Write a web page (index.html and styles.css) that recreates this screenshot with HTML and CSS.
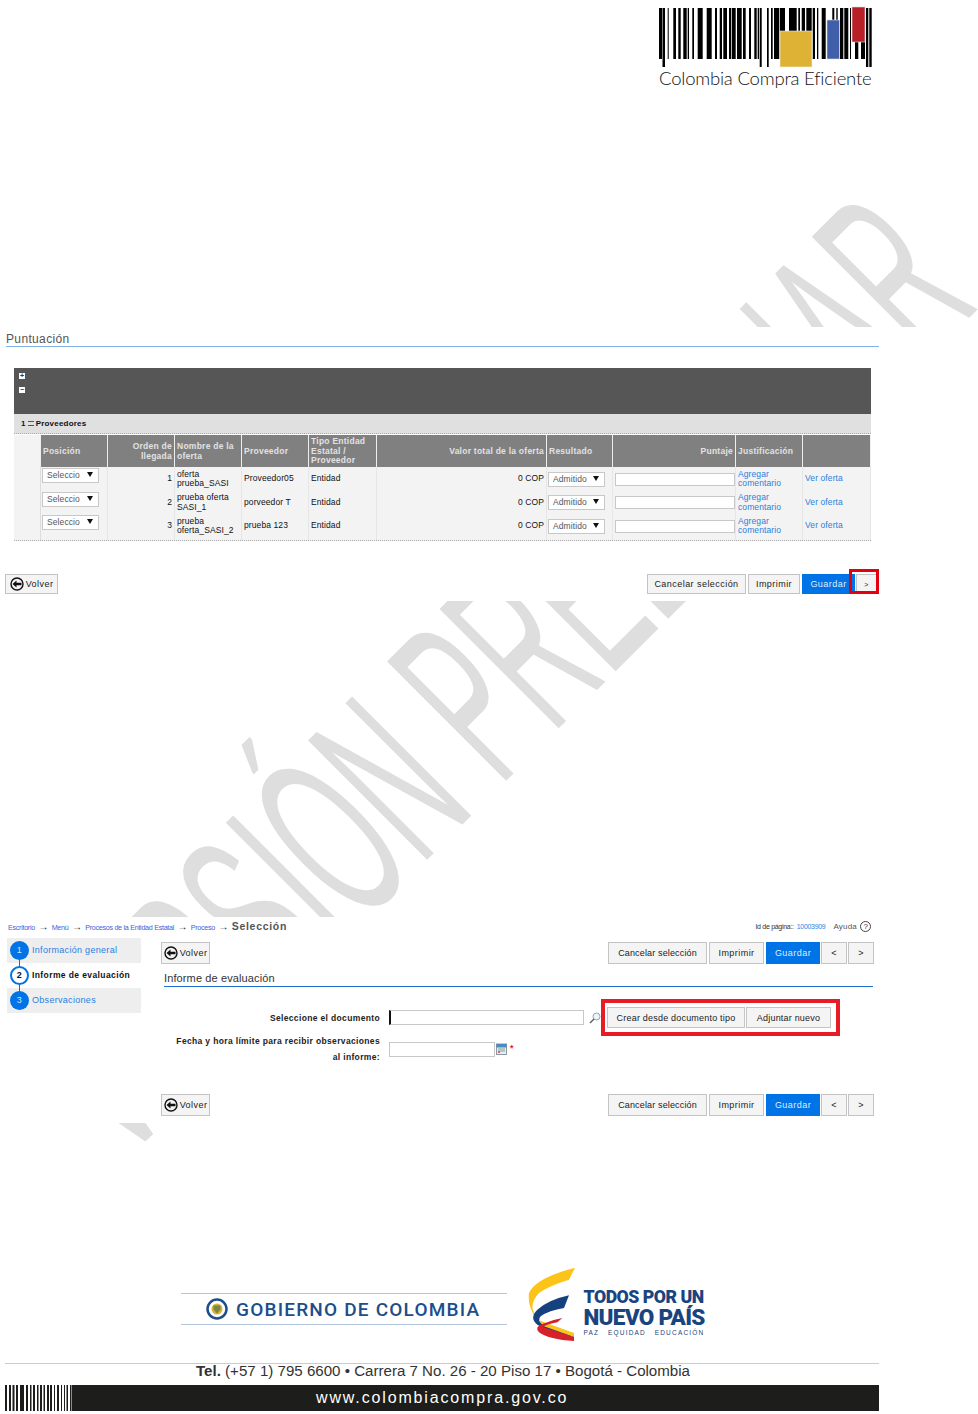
FILE: index.html
```html
<!DOCTYPE html>
<html lang="es">

<head>
    <meta charset="utf-8">
    <title>Colombia Compra Eficiente</title>
    <link rel="stylesheet" href="styles.css">
</head>

<body>
    <svg class="watermark" viewBox="0 0 978 1414" aria-hidden="true">
        <text transform="translate(123 1164) rotate(-45) scale(.455 1)" font-size="245">VERSIÓN PRELIMINAR</text>
    </svg>

    <header class="top">
        <div class="brand">
            <svg class="brand-bars" viewBox="655 4 220 66">
                <path fill="#000" d="M659 8h3v51h-3zM662.5 8h2.5v59h-2.5zM667.7 8h1v51h-1zM673.3 8h2.7v51h-2.7zM678.3 8h2.4v51h-2.4zM683.3 8h3.4v51h-3.4zM687.7 8h1.3v51h-1.3zM692.3 8h1.7v51h-1.7zM697.7 8h5v51h-5zM706.7 8h5v51h-5zM715 8h2v51h-2zM719.7 8h2.3v51h-2.3zM723.3 8h3.7v51h-3.7zM729 8h2v51h-2zM731.7 8h4v51h-4zM737 8h4.7v51h-4.7zM743 8h2.7v51h-2.7zM749 8h2v51h-2zM754.3 8h2.4v51h-2.4zM757.7 8h1.3v51h-1.3zM759.7 8h2v59h-2zM767 8h1.7v59h-1.7zM771 8h1.7v51h-1.7zM774 8h5v51h-5zM779.7 8h5.3v51h-5.3zM789 8h7.7v51h-7.7zM798.3 8h1.7v51h-1.7zM801.7 8h3.3v51h-3.3zM806.3 8h5.4v51h-5.4zM812.7 8h2.3v51h-2.3zM817 8h1.3v51h-1.3zM821.7 8h4v51h-4zM832.3 8h2v51h-2zM836.3 8h1.4v51h-1.4zM840 8h3.3v51h-3.3zM844.3 8h4v51h-4zM850 8h1v51h-1zM855 8h3.3v51h-3.3zM861 8h4v51h-4zM866 8h2.3v59h-2.3zM869.3 8h2.4v59h-2.4z" />
                <rect x="780" y="31" width="32" height="36" fill="#deb335" stroke="#eee" stroke-width=".6" />
                <rect x="827" y="20" width="12.500" height="39" fill="#3f5fa8" stroke="#ddd" stroke-width=".6" />
                <rect x="852" y="7" width="13" height="35" fill="#b81f27" stroke="#ddd" stroke-width=".6" />
            </svg>
            <div class="brand-name">Colombia Compra Eficiente</div>
        </div>
    </header>

    <section class="shot score">
        <h2 class="score-title">Puntuación</h2>
        <div class="panel">
            <div class="panel-head">
                <span class="toggle">+</span>
                <span class="toggle">&minus;</span>
            </div>
            <div class="group-row"><b>1</b> <span class="group-icon"></span> <b>Proveedores</b></div>
            <table class="grid">
                <colgroup>
                    <col class="c-indent">
                    <col class="c-std">
                    <col class="c-std">
                    <col class="c-std">
                    <col class="c-std">
                    <col class="c-tipo">
                    <col class="c-valor">
                    <col class="c-res">
                    <col class="c-puntaje">
                    <col class="c-std">
                    <col class="c-last">
                </colgroup>
                <thead>
                    <tr>
                        <td class="indent"></td>
                        <th>Posición</th>
                        <th class="num">Orden de llegada</th>
                        <th>Nombre de la oferta</th>
                        <th>Proveedor</th>
                        <th>Tipo Entidad Estatal / Proveedor</th>
                        <th class="num">Valor total de la oferta</th>
                        <th>Resultado</th>
                        <th class="num">Puntaje</th>
                        <th>Justificación</th>
                        <th></th>
                    </tr>
                </thead>
                <tbody>
                    <tr>
                        <td class="indent"></td>
                        <td class="pos"><div class="select">Seleccio</div></td>
                        <td class="num">1</td>
                        <td>oferta prueba_SASI</td>
                        <td>Proveedor05</td>
                        <td>Entidad</td>
                        <td class="num">0 COP</td>
                        <td><div class="select">Admitido</div></td>
                        <td class="score-cell"><input class="field" type="text"></td>
                        <td><a href="#">Agregar comentario</a></td>
                        <td><a href="#">Ver oferta</a></td>
                    </tr>
                    <tr>
                        <td class="indent"></td>
                        <td class="pos"><div class="select">Seleccio</div></td>
                        <td class="num">2</td>
                        <td>prueba oferta SASI_1</td>
                        <td>porveedor T</td>
                        <td>Entidad</td>
                        <td class="num">0 COP</td>
                        <td><div class="select">Admitido</div></td>
                        <td class="score-cell"><input class="field" type="text"></td>
                        <td><a href="#">Agregar comentario</a></td>
                        <td><a href="#">Ver oferta</a></td>
                    </tr>
                    <tr>
                        <td class="indent"></td>
                        <td class="pos"><div class="select">Seleccio</div></td>
                        <td class="num">3</td>
                        <td>prueba oferta_SASI_2</td>
                        <td>prueba 123</td>
                        <td>Entidad</td>
                        <td class="num">0 COP</td>
                        <td><div class="select">Admitido</div></td>
                        <td class="score-cell"><input class="field" type="text"></td>
                        <td><a href="#">Agregar comentario</a></td>
                        <td><a href="#">Ver oferta</a></td>
                    </tr>
                </tbody>
            </table>
        </div>
        <div class="actions score-actions">
            <button class="btn btn-back">
                <svg class="back-icon" viewBox="0 0 14 14"><circle cx="7" cy="7" r="6" fill="none" stroke="#111" stroke-width="1.4" /><path fill="#111" d="M2.500 7l4-3.500v2.300h5v2.400h-5v2.300z" /></svg>
                Volver
            </button>
            <div class="actions-right">
                <button class="btn btn-cancel">Cancelar selección</button>
                <button class="btn btn-print">Imprimir</button>
                <button class="btn btn-save">Guardar</button>
                <button class="btn btn-next marked-next">&gt;</button>
            </div>
        </div>
    </section>

    <section class="shot eval">
        <div class="crumbs">
            <nav class="crumb-path">
                <a href="#">Escritorio</a><span class="arrow">&rarr;</span>
                <a href="#">Menú</a><span class="arrow">&rarr;</span>
                <a href="#">Procesos de la Entidad Estatal</a><span class="arrow">&rarr;</span>
                <a href="#">Proceso</a><span class="arrow">&rarr;</span>
                <strong>Selección</strong>
            </nav>
            <div class="page-id">
                <span class="page-id-label">Id de página::</span>
                <a href="#">10003909</a>
                <span class="help">Ayuda</span>
                <span class="help-icon">?</span>
            </div>
        </div>
        <div class="eval-body">
            <ol class="steps">
                <li class="step"><span class="step-dot">1</span><a class="step-label" href="#">Información general</a></li>
                <li class="step step-on"><span class="step-dot">2</span><span class="step-label">Informe de evaluación</span></li>
                <li class="step"><span class="step-dot">3</span><a class="step-label" href="#">Observaciones</a></li>
            </ol>
            <div class="eval-main">
                <div class="actions">
                    <button class="btn btn-back-sm">
                        <svg class="back-icon" viewBox="0 0 14 14"><circle cx="7" cy="7" r="6" fill="none" stroke="#111" stroke-width="1.4" /><path fill="#111" d="M2.500 7l4-3.500v2.300h5v2.400h-5v2.300z" /></svg>
                        Volver
                    </button>
                    <div class="actions-right">
                        <button class="btn btn-cancel">Cancelar selección</button>
                        <button class="btn btn-print-lg">Imprimir</button>
                        <button class="btn btn-save">Guardar</button>
                        <button class="btn btn-arrow">&lt;</button>
                        <button class="btn btn-arrow">&gt;</button>
                    </div>
                </div>
                <h2 class="eval-title">Informe de evaluación</h2>
                <div class="form-row">
                    <label class="form-label">Seleccione el documento</label>
                    <input class="field doc-field" type="text">
                    <svg class="search-icon" viewBox="0 0 12 12"><circle cx="7.500" cy="4.500" r="3.500" fill="#eef4f8" stroke="#8fa6b5" /><path d="M5 7l-4 4" stroke="#666" stroke-width="1.600" /></svg>
                    <div class="marked-group">
                        <button class="btn btn-doc">Crear desde documento tipo</button>
                        <button class="btn btn-new">Adjuntar nuevo</button>
                    </div>
                </div>
                <div class="form-row form-row-date">
                    <label class="form-label">Fecha y hora límite para recibir observaciones al informe:</label>
                    <input class="field date-field" type="text">
                    <svg class="cal-icon" viewBox="0 0 11 12"><rect x=".5" y="1" width="10" height="10.500" fill="#e8edf0" stroke="#8a9aa5" /><rect x=".5" y="1" width="10" height="3.500" fill="#4a8cc0" /><path d="M2 6h7M2 8h7" stroke="#8a9aa5" /><rect x="2" y="8" width="2" height="2" fill="#d66" /></svg>
                    <span class="required">*</span>
                </div>
                <div class="actions eval-actions">
                    <button class="btn btn-back-sm">
                        <svg class="back-icon" viewBox="0 0 14 14"><circle cx="7" cy="7" r="6" fill="none" stroke="#111" stroke-width="1.4" /><path fill="#111" d="M2.500 7l4-3.500v2.300h5v2.400h-5v2.300z" /></svg>
                        Volver
                    </button>
                    <div class="actions-right">
                        <button class="btn btn-cancel">Cancelar selección</button>
                        <button class="btn btn-print-lg">Imprimir</button>
                        <button class="btn btn-save">Guardar</button>
                        <button class="btn btn-arrow">&lt;</button>
                        <button class="btn btn-arrow">&gt;</button>
                    </div>
                </div>
            </div>
        </div>
    </section>

    <footer class="foot">
        <div class="foot-logos">
            <div class="gov">
                <svg class="gov-seal" viewBox="0 0 22 22"><circle cx="11" cy="11" r="9.500" fill="#fff" stroke="#1c4d8c" stroke-width="2.500" /><circle cx="11" cy="11" r="5.500" fill="#d9b23a" /><path d="M7.500 7.500h7v4l-3.500 4-3.500-4z" fill="#3b6b4a" opacity=".6" /></svg>
                <span class="gov-name">GOBIERNO DE COLOMBIA</span>
            </div>
            <svg class="swoosh" viewBox="0 0 180 246">
                <path fill="#fcc419" d="M168 14L150 50Q90 68 60 90Q40 110 40 135L52 168Q25 130 30 90Q50 45 168 14z" />
                <path fill="#15427e" d="M150 97L135 135Q90 142 65 160Q52 172 75 188L165 215V222Q90 208 55 185Q30 165 55 140Q90 110 150 97z" />
                <path fill="#fcc419" d="M60 172L165 210V222L75 190z" />
                <path fill="#d8202a" d="M130 165L115 178Q85 183 72 192L165 222V234Q90 230 60 208Q45 192 70 183Q100 170 130 165z" />
            </svg>
            <div class="slogan">
                <div class="slogan-one">TODOS POR UN</div>
                <div class="slogan-two">NUEVO PAÍS</div>
                <div class="slogan-three"><span>PAZ</span><span>EQUIDAD</span><span>EDUCACIÓN</span></div>
            </div>
        </div>
        <div class="contact"><b>Tel.</b> (+57 1) 795 6600 • Carrera 7 No. 26 - 20 Piso 17 • Bogotá - Colombia</div>
        <div class="site-bar">
            <svg class="site-bars" viewBox="5 0 67 26"><path fill="#1d1d1b" d="M5 0h2v26h-2zM9 0h2v26h-2zM12.500 0h2v26h-2zM16 0h2v26h-2zM20 0h4v26h-4zM26 0h2v26h-2zM30 0h1.500v26h-1.500zM33 0h2v26h-2zM37 0h1.500v26h-1.500zM40 0h2v26h-2zM43.500 0h1.500v26h-1.500zM47 0h2v26h-2zM50 0h2v26h-2zM54 0h1v26h-1zM57 0h2v26h-2zM61 0h1v26h-1zM64 0h1v26h-1zM66.500 0h1.500v26h-1.500zM70 0h1.500v26h-1.500z" /></svg>
            <div class="site-url">www.colombiacompra.gov.co</div>
        </div>
    </footer>
</body>

</html>
```

FILE: styles.css
```css
html {
    background: #fff;
}

body {
    position: relative;
    margin: 0;
    width: 978px;
    height: 1414px;
    overflow: hidden;
    font-family: "Liberation Sans", Arial, sans-serif;
    font-size: 8.5px;
    color: #111;
}

a {
    color: #2a7fe0;
    text-decoration: none;
}

.watermark {
    position: absolute;
    left: 0;
    top: 0;
    width: 978px;
    height: 1414px;
    z-index: -1;
}

.watermark text {
    font-family: "Liberation Sans", Arial, sans-serif;
    fill: #dedede;
}

/* header logo */
.top {
    height: 327px;
    display: flex;
    justify-content: flex-end;
    padding-right: 103px;
    box-sizing: border-box;
    padding-top: 4px;
}

.brand {
    width: 220px;
}

.brand-bars {
    display: block;
    width: 220px;
    height: 66px;
}

.brand-name {
    margin: -2px 0 0 4px;
    font-family: Lato, "Open Sans", sans-serif;
    font-weight: 300;
    font-size: 18.5px;
    line-height: 21px;
    letter-spacing: -.2px;
    color: #111;
    white-space: nowrap;
}

.shot {
    background: #fff;
}

/* first screenshot */
.score {
    height: 274px;
    padding: 0 99px 0 6px;
}

.score-title {
    margin: 0;
    padding-top: 5px;
    height: 14px;
    font-size: 12px;
    line-height: 14px;
    font-weight: normal;
    letter-spacing: .35px;
    color: #555;
    border-bottom: 1px solid #7fb2e2;
}

.panel {
    margin: 21px 8px 0;
}

.panel-head {
    height: 46px;
    background: #565656;
    padding: 5px 0 0 5px;
    box-sizing: border-box;
}

.toggle {
    display: block;
    width: 6px;
    height: 6px;
    margin-bottom: 8px;
    background: #fff;
    color: #333;
    font-size: 7px;
    line-height: 6px;
    font-weight: bold;
    text-align: center;
}

.group-row {
    height: 19px;
    line-height: 19px;
    background: #e0e0e0;
    border-bottom: 1px dotted #aaa;
    padding-left: 7px;
    font-size: 8px;
    letter-spacing: .2px;
    color: #111;
    margin-bottom: 1px;
    display: flex;
    align-items: center;
    gap: 1px;
}

.group-icon {
    width: 6px;
    height: 5px;
    border-top: 1px solid #555;
    border-bottom: 1px solid #555;
    box-sizing: border-box;
    margin: 0 1px;
}

.grid {
    width: 857px;
    table-layout: fixed;
    border-collapse: separate;
    border-spacing: 0;
    background: #f3f3f3;
    border-bottom: 1px dotted #aaa;
    letter-spacing: .1px;
}

.c-indent {
    width: 27px;
}

.c-std {
    width: 67px;
}

.c-tipo {
    width: 68px;
}

.c-valor {
    width: 170px;
}

.c-res {
    width: 66px;
}

.c-puntaje {
    width: 123px;
}

.c-last {
    width: 68px;
}

.grid th {
    height: 32px;
    padding: 1px 2px 0;
    box-sizing: border-box;
    background: #808080;
    color: #e2e2e2;
    font-size: 8.5px;
    line-height: 9.5px;
    letter-spacing: .25px;
    text-align: left;
    border-right: 1px solid #eee;
    overflow: hidden;
}

.grid th.num {
    text-align: right;
}

.grid .indent {
    background: #f3f3f3;
    padding: 0;
    border-right: 1px solid #eee;
}

.grid tbody td {
    box-sizing: border-box;
    height: 24px;
    padding: 0 2px;
    font-size: 8.5px;
    line-height: 9.5px;
    border-right: 1px solid #e6e6e6;
    vertical-align: middle;
}

.grid tbody tr:nth-child(2) td {
    height: 23px;
}

.grid tbody tr:last-child td {
    height: 26px;
    padding-bottom: 2px;
}

.grid tbody td.indent {
    border-right-color: #ddd;
}

.grid td.num {
    text-align: right;
}

.grid td.pos {
    vertical-align: top;
    padding-top: 1px;
}

.grid td.score-cell {
    padding-left: 2px;
    padding-right: 0;
}

.select {
    position: relative;
    width: 57px;
    height: 15px;
    box-sizing: border-box;
    margin-left: -1px;
    padding-left: 4px;
    line-height: 12px;
    background: #fff;
    border: 1px solid #c8c8c8;
    color: #555;
}

.select::after {
    content: "";
    position: absolute;
    right: 5px;
    top: 3px;
    border-left: 3px solid transparent;
    border-right: 3px solid transparent;
    border-top: 5px solid #111;
}

.field {
    display: block;
    box-sizing: border-box;
    width: 100%;
    height: 13px;
    margin: 0;
    padding: 0;
    border: 1px solid #c8c8c8;
    background: #fff;
    border-radius: 0;
}

/* buttons */
.actions {
    display: flex;
    justify-content: space-between;
    align-items: flex-start;
}

.actions-right {
    display: flex;
    gap: 2px;
}

.score-actions {
    margin: 33px 2px 0 -1px;
}

.btn {
    display: flex;
    align-items: center;
    justify-content: center;
    gap: 2px;
    height: 20px;
    margin: 0;
    padding: 0;
    box-sizing: border-box;
    background: #f4f4f4;
    border: 1px solid #c4c4c4;
    font-family: inherit;
    font-size: 9px;
    letter-spacing: .45px;
    color: #222;
    white-space: nowrap;
}

.back-icon {
    width: 14px;
    height: 14px;
}

.btn-back {
    width: 53px;
}

.btn-cancel {
    width: 99px;
}

.btn-print {
    width: 52px;
}

.btn-save {
    width: 53px;
    background: #0073e6;
    border-color: #0073e6;
    color: #dfefff;
}

.btn-next {
    width: 21px;
    font-size: 7px;
    margin-left: -1px;
}

.marked-next {
    position: relative;
}

.marked-next::after {
    content: "";
    position: absolute;
    left: -8px;
    right: -3px;
    top: -6px;
    bottom: -1px;
    border: 3px solid #e6000f;
}

/* second screenshot */
.eval {
    margin-top: 316px;
    height: 206px;
    padding-left: 7px;
}

.crumbs {
    height: 21px;
    display: flex;
    justify-content: space-between;
    align-items: flex-end;
    padding: 0 107px 6px 1px;
    box-sizing: border-box;
}

.crumb-path {
    display: flex;
    align-items: baseline;
    gap: 3px;
    font-size: 7.2px;
    letter-spacing: -.3px;
}

.crumb-path a {
    color: #3f5fe0;
}

.arrow {
    font-size: 10px;
    margin: 0 .5px;
    color: #222;
}

.crumb-path strong {
    font-size: 10.5px;
    letter-spacing: .7px;
    color: #555;
}

.page-id {
    display: flex;
    align-items: center;
    gap: 3px;
    font-size: 7px;
    color: #333;
    letter-spacing: -.3px;
}

.help {
    margin-left: 5px;
    font-size: 8px;
    color: #555;
    letter-spacing: .2px;
}

.help-icon {
    width: 9px;
    height: 9px;
    border: 1px solid #444;
    border-radius: 50%;
    font-size: 8px;
    line-height: 9px;
    text-align: center;
    color: #333;
}

.eval-body {
    display: flex;
    gap: 20px;
}

.steps {
    width: 134px;
    height: 75px;
    margin: 0;
    padding: 0;
    list-style: none;
    background: #eee;
    font-size: 9px;
    letter-spacing: .3px;
}

.step {
    position: relative;
    height: 25px;
    display: flex;
    align-items: center;
    gap: 3px;
    padding-left: 3px;
}

.step-label {
    margin-top: -2px;
}

.step-on {
    background: #fff;
    font-weight: bold;
    color: #111;
    font-size: 8.5px;
    letter-spacing: .4px;
}

.step + .step::before {
    content: "";
    position: absolute;
    left: 12px;
    top: -5px;
    width: 1px;
    height: 9px;
    background: #0073e6;
}

.step-dot {
    position: relative;
    width: 19px;
    height: 19px;
    flex: none;
    box-sizing: border-box;
    border-radius: 50%;
    background: #0073e6;
    color: #cfe4ff;
    text-align: center;
    line-height: 19px;
    font-weight: normal;
    font-size: 9px;
}

.step-on .step-dot {
    background: #fff;
    border: 2px solid #0073e6;
    color: #111;
    font-weight: bold;
    line-height: 15px;
}

.eval-main {
    width: 713px;
    padding-top: 4px;
}

.btn-back-sm {
    width: 49px;
    height: 22px;
}

.eval-main .btn-cancel,
.eval-main .btn-save,
.eval-main .btn-print-lg,
.eval-main .btn-arrow {
    height: 22px;
}

.eval-main .btn-cancel {
    letter-spacing: .15px;
}

.btn-print-lg {
    width: 55px;
}

.eval-main .btn-save {
    width: 54px;
}

.btn-arrow {
    width: 26px;
    margin-left: -1px;
}

.eval-title {
    margin: 7px 1px 0 3px;
    height: 15px;
    font-size: 11px;
    line-height: 15px;
    font-weight: normal;
    letter-spacing: .12px;
    color: #333;
    border-bottom: 1px solid #1f6fd0;
}

.form-row {
    display: flex;
    align-items: center;
    height: 37px;
    margin-top: 12px;
}

.form-label {
    width: 210px;
    flex: none;
    margin: 0 9px;
    text-align: right;
    font-weight: bold;
    font-size: 8.5px;
    letter-spacing: .35px;
    color: #222;
    line-height: 16px;
}

.doc-field {
    width: 195px;
    height: 15px;
    border-left: 2px solid #111;
}

.search-icon {
    width: 12px;
    height: 12px;
    margin-left: 5px;
    flex: none;
}

.marked-group {
    display: flex;
    gap: 1px;
    width: 239px;
    height: 37px;
    box-sizing: border-box;
    padding: 4px 4px 4px 2px;
    border: 4px solid #e81c27;
    background: #fff;
}

.marked-group .btn {
    height: 21px;
    letter-spacing: .2px;
}

.btn-doc {
    width: 138px;
}

.btn-new {
    width: 85px;
}

.form-row-date {
    margin-top: -3px;
    height: 35px;
    align-items: flex-start;
}

.date-field {
    width: 106px;
    height: 15px;
    margin-top: 9px;
}

.cal-icon {
    width: 11px;
    height: 12px;
    margin: 10px 0 0 1px;
    flex: none;
}

.required {
    margin: 10px 0 0 3px;
    color: #e81c27;
    font-size: 9px;
    font-weight: bold;
}

.eval-actions {
    margin-top: 26px;
}

/* footer */
.foot-logos {
    display: flex;
    align-items: flex-start;
    margin-top: 144px;
    padding-left: 181px;
    height: 96px;
}

.gov {
    width: 326px;
    height: 32px;
    margin-top: 26px;
    box-sizing: border-box;
    border-top: 1px solid #b4c6dc;
    border-bottom: 1px solid #b4c6dc;
    display: flex;
    align-items: center;
    padding-left: 25px;
    gap: 8px;
    flex: none;
}

.gov-seal {
    width: 22px;
    height: 22px;
}

.gov-name {
    font-family: Roboto, "Liberation Sans", sans-serif;
    font-weight: 500;
    font-size: 19px;
    letter-spacing: 1.2px;
    color: #1c4d8c;
    white-space: nowrap;
}

.swoosh {
    width: 60px;
    height: 82px;
    margin: -4px 0 0 12px;
    flex: none;
}

.slogan {
    margin: 21px 0 0 4.5px;
    width: 121px;
    color: #1a4480;
    font-family: Roboto, "Liberation Sans", sans-serif;
    font-weight: 900;
}

.slogan-one {
    font-size: 17.7px;
    line-height: 18px;
    letter-spacing: -.5px;
    white-space: nowrap;
}

.slogan-two {
    font-size: 22.5px;
    line-height: 22px;
    letter-spacing: -.7px;
    white-space: nowrap;
}

.slogan-three {
    display: flex;
    justify-content: space-between;
    font-family: "Liberation Sans", sans-serif;
    font-weight: normal;
    font-size: 6.5px;
    letter-spacing: 1.2px;
    line-height: 10px;
}

.contact {
    margin-left: 5px;
    width: 874px;
    height: 22px;
    box-sizing: border-box;
    border-top: 1px solid #ccc;
    padding-left: 191px;
    font-size: 15.1px;
    line-height: 13px;
    color: #333;
    white-space: nowrap;
}

.site-bar {
    display: flex;
    margin-left: 5px;
    width: 874px;
    height: 26px;
}

.site-bars {
    width: 67px;
    height: 26px;
    flex: none;
}

.site-url {
    flex: 1;
    background: #1d1d1b;
    color: #fff;
    font-size: 16px;
    line-height: 26px;
    letter-spacing: 1.85px;
    padding-left: 244px;
    white-space: nowrap;
}
```
